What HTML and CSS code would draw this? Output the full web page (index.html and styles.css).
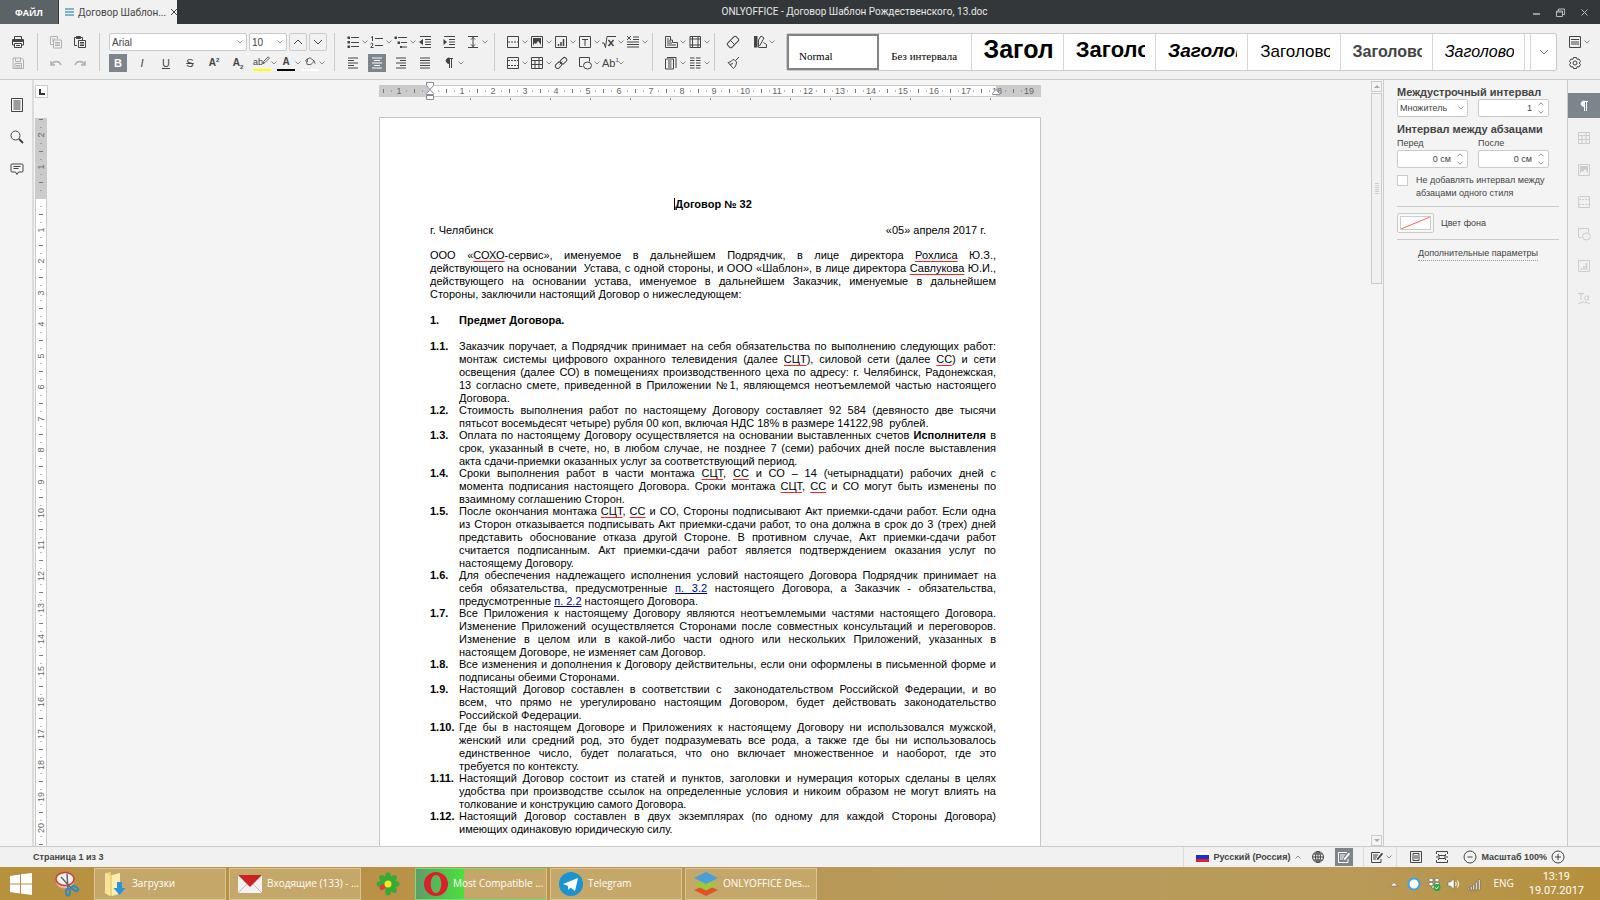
FILE: index.html
```html
<!DOCTYPE html>
<html lang="ru">
<head>
<meta charset="utf-8">
<title>ONLYOFFICE - Договор Шаблон Рождественского, 13.doc</title>
<link rel="stylesheet" href="styles.css">
<script src="rulers.js" defer></script>
</head>
<body>
<svg class="sprite" aria-hidden="true">
  <symbol id="caret" viewBox="0 0 6 4"><path d="M.5.5 3 3 5.5.5" fill="none" stroke="#888"/></symbol>
  <symbol id="up" viewBox="0 0 10 6"><path d="M1 5 5 1l4 4"/></symbol>
  <symbol id="down" viewBox="0 0 10 6"><path d="M1 1l4 4 4-4"/></symbol>
  <symbol id="print" viewBox="0 0 14 14"><path d="M3.5 4V1.5h7V4M3.5 10h-2V4.500h11V10h-2M3.500 8.500h7v4h-7zM5 10.500h4"/><path d="M2 5.500h10v1H2z" fill="currentColor"/></symbol>
  <symbol id="save" viewBox="0 0 14 14"><path d="M2 2h8.500L12.500 4v8.500H2zM4.500 2v3.500h5V2M4 12.500v-5h6.500v5M5 9.500h4.500M5 11h4.500"/></symbol>
  <symbol id="copy" viewBox="0 0 14 14"><path d="M4 9.500H1.500v-8h7V4M3 4h3M3 6h1M4.500 5h8v8h-8zM6 7.500h5M6 9h5M6 10.500h5"/></symbol>
  <symbol id="paste" viewBox="0 0 14 14"><path d="M4 10.500H1.500v-8h8V5M5.500 5.500h7v7h-7zM7 7.500h4M7 9h4M7 10.500h4"/><path d="M3.500 1.500h4v2h-4z" fill="currentColor"/></symbol>
  <symbol id="undo" viewBox="0 0 14 14"><path d="M2 5v4h4M2.500 8.500C5 4.500 10 4.500 12 9" stroke-width="1.500"/></symbol>
  <symbol id="redo" viewBox="0 0 14 14"><path d="M12 5v4H8M11.500 8.500C9 4.500 4 4.500 2 9" stroke-width="1.500"/></symbol>
  <symbol id="bullets" viewBox="0 0 14 14"><path d="M5 2.500h8M5 7.500h8M5 11.500h8"/><path d="M1.500 1.500h2.500v2.500H1.500zM1.500 6h2.500v2.500H1.500zM1.500 10.500h2.500V13H1.500z" fill="currentColor" stroke="none"/></symbol>
  <symbol id="numbers" viewBox="0 0 14 14"><path d="M5 3.500h8M5 10.500h8M1 2.500l1.500-1V6M.5 9q1-1.500 2.200-.5T.800 12.500H3.500"/></symbol>
  <symbol id="levels" viewBox="0 0 14 14"><path d="M4 2.500h9M7 7.500h6M9 12h4"/><path d="M.5 1.500H3V4H.5zM3.500 6.500H6V9H3.500zM6 11h2.500v2H6z" fill="currentColor" stroke="none"/></symbol>
  <symbol id="outdent" viewBox="0 0 14 14"><path d="M2 1.500h11M7 4.500h6M7 7h6M7 9.500h6M2 12.500h11"/><path d="M1 7l4-3v6z" fill="currentColor" stroke="none"/></symbol>
  <symbol id="indent" viewBox="0 0 14 14"><path d="M2 1.500h11M7 4.500h6M7 7h6M7 9.500h6M2 12.500h11"/><path d="M5 7L1.500 4v6z" fill="currentColor" stroke="none"/></symbol>
  <symbol id="spacing" viewBox="0 0 14 14"><path d="M2 1.500h10M2 12.500h10M7 2v10M5 4.500 7 2.500l2 2M5 9.500l2 2 2-2"/></symbol>
  <symbol id="left" viewBox="0 0 14 14"><path d="M2 2h10M2 4.500h6M2 7h10M2 9.500h6M2 12h10"/></symbol>
  <symbol id="center" viewBox="0 0 14 14"><path d="M2 2h10M4 4.500h6M2 7h10M4 9.500h6M2 12h10"/></symbol>
  <symbol id="right" viewBox="0 0 14 14"><path d="M2 2h10M6 4.500h6M2 7h10M6 9.500h6M2 12h10"/></symbol>
  <symbol id="justify" viewBox="0 0 14 14"><path d="M2 2h10M2 4.500h10M2 7h10M2 9.500h10M2 12h10"/></symbol>
  <symbol id="para" viewBox="0 0 14 14"><path d="M7.500 2v10M9.500 2v10M6 2.500h5"/><path d="M7.500 2v5.500C3 7.500 3 2 7.500 2z" fill="currentColor"/></symbol>
  <symbol id="break" viewBox="0 0 14 14"><path d="M1.500 1.500h11v11h-11z"/><path d="M2 7h11" stroke-dasharray="2 1"/></symbol>
  <symbol id="header" viewBox="0 0 14 14"><path d="M1.500 1.500h11v11h-11z"/><path d="M2 4.500h11M2 9.500h11" stroke-dasharray="2 1"/></symbol>
  <symbol id="image" viewBox="0 0 14 14"><path d="M1.500 1.500h11v11h-11z"/><path d="M3 3h8v7L8 6l-2 3-1.500-1L3 11z" fill="currentColor" stroke="none"/></symbol>
  <symbol id="chart" viewBox="0 0 14 14"><path d="M1.500 1.500h11v11h-11z"/><path d="M4.500 11V9M7 11V7M9.500 11V4" stroke-width="1.500"/></symbol>
  <symbol id="textbox" viewBox="0 0 14 14"><path d="M1.500 1.500h11v11h-11zM4 4.500h6M7 4.500V11"/></symbol>
  <symbol id="formula" viewBox="0 0 14 14"><path d="M0 8h2l1.500 4.500L5 1.500h9"/><path d="M6.500 5l5 6M11.500 5l-5 6" stroke-width="1.500"/></symbol>
  <symbol id="dropcap" viewBox="0 0 14 14"><path d="M1 1l4 4M5 1 1 5M7 2h6M7 4.500h6M1 7h12M1 9.500h12M1 12h12"/></symbol>
  <symbol id="table" viewBox="0 0 14 14"><path d="M1.500 1.500h11v11h-11zM1.500 4.500h11M1.500 8.500h11M5 4.500v8M9 1.500v11"/></symbol>
  <symbol id="link" viewBox="0 0 14 14"><rect x="6" y="2.500" width="7" height="4.500" rx="2" transform="rotate(-45 9.500 4.700)"/><rect x="1" y="7" width="7" height="4.500" rx="2" transform="rotate(-45 4.500 9.200)"/><path d="M5.500 8.500l3-3"/></symbol>
  <symbol id="shape" viewBox="0 0 14 14"><path d="M4.500 10.500h-3v-9h10v4"/><ellipse cx="9.500" cy="9.500" rx="4" ry="3.500"/></symbol>
  <symbol id="pagesize" viewBox="0 0 14 14"><path d="M1.500 12.500v-11h5V5h2v2.500h5v5zM3 4h2M3 6h4M3 8h5M3 10h9"/></symbol>
  <symbol id="margins" viewBox="0 0 14 14"><path d="M2 1.500h10.500v11H2zM4.500 1.500v11M10 1.500v11M2 4h10.500M2 10h10.500"/></symbol>
  <symbol id="orient" viewBox="0 0 14 14"><path d="M1.500 3h8v10h-8zM3 1.500h9V12M4 5h3.500M4 7h3.500M4 9h3.500M4 11h3.500"/></symbol>
  <symbol id="columns" viewBox="0 0 14 14"><path d="M2 2h4.500M2 4.500h4.500M2 7h4.500M2 9.500h4.500M2 12h4.500M8 2h4.500M8 4.500h4.500M8 7h4.500M8 9.500h4.500M8 12h4.500"/></symbol>
  <symbol id="eraser" viewBox="0 0 14 14"><rect x="1" y="4" width="12" height="6" rx="1.500" transform="rotate(-45 7 7)"/><path d="M4.500 5.500l4 4"/></symbol>
  <symbol id="brush" viewBox="0 0 14 14"><path d="M13 1 9.500 4.500M2 6.500C5 6.500 6 3.500 8 3.500L10.500 6C10.500 9 9 11.500 7.500 12.500zM4 8.500l3-1"/></symbol>
  <symbol id="scheme" viewBox="0 0 14 14"><path d="M5.500 12.500V5l2.500-4 3 2-4.500 8M6 12.500h7.500v-3L10.500 7.500"/><path d="M1 1h3.500v11.500H1z" fill="currentColor" stroke="none"/></symbol>
  <symbol id="marker" viewBox="0 0 18 14"><path d="M9 9l1-3 5-5 1.500 1.500-5 5z"/></symbol>
  <symbol id="bucket" viewBox="0 0 14 14"><path d="M2 5l5-3 5 4-4 4H4zM4 3v4M12 6l1 3"/></symbol>
  <symbol id="view" viewBox="0 0 14 14"><path d="M1.500 1.500h11v11h-11z"/><path d="M3 4.500h8M3 7h8M3 9h8"/></symbol>
  <symbol id="gear" viewBox="0 0 14 14"><circle cx="7" cy="7" r="2"/><path d="M5.500 1.500h3l.5 1.800 2-.3 1.500 2.500L11.200 7l1.300 1.500L11 11l-2-.3-.5 1.800h-3L5 10.700 3 11 1.500 8.500 2.800 7 1.500 5.500 3 3l2 .3z"/></symbol>
  <symbol id="pages" viewBox="0 0 14 14"><path d="M1.500.5h11v13h-11z"/><path d="M3.500 3h7M3.500 5h7M3.500 7h7M3.500 9h7M3.500 11h7"/></symbol>
  <symbol id="search" viewBox="0 0 14 14"><circle cx="5.500" cy="5.500" r="4.500"/><path d="M9 9l4 4" stroke-width="2"/></symbol>
  <symbol id="comment" viewBox="0 0 14 14"><path d="M2 2h10q1 0 1 1v6q0 1-1 1H8.500L7 12.500 5.500 10H2q-1 0-1-1V3q0-1 1-1zM3.500 4.500h7M3.500 6.500h5"/></symbol>
  <symbol id="textart" viewBox="0 0 14 14"><path d="M1 2.500h6M4 2.500V9M13 13Q7 9 1 13"/><circle cx="9.500" cy="7" r="2"/><path d="M11.500 4.500V9"/></symbol>
  <symbol id="globe" viewBox="0 0 14 14"><circle cx="7" cy="7" r="5.500"/><ellipse cx="7" cy="7" rx="2.500" ry="5.500"/><path d="M1.500 7h11M2.500 4h9M2.500 10h9M7 1.500v11"/></symbol>
  <symbol id="edit" viewBox="0 0 14 14"><path d="M11 9v3.500H1.500v-10H10M3 5h5M3 7h4M3 9h3M7 9l5.500-6"/><path d="M6.500 9.500l5-6.500 1.500 1-5 6z" fill="currentColor" stroke="none"/></symbol>
  <symbol id="fitpage" viewBox="0 0 14 14"><path d="M1.500 1.500h11v11h-11z"/><path d="M4 3.500h6v7H4zM5 6h4M5 8h4"/></symbol>
  <symbol id="fitwidth" viewBox="0 0 14 14"><path d="M1.500 4V1.500h11V4M1.500 10v2.500h11V10M1 7h2M11 7h2M4 5.500h6v3H4zM3.500 4v1.500h7V4M3.500 10V8.500h7V10"/></symbol>
  <symbol id="minus" viewBox="0 0 14 14"><circle cx="7" cy="7" r="6"/><path d="M4.500 7h5"/></symbol>
  <symbol id="plus" viewBox="0 0 14 14"><circle cx="7" cy="7" r="6"/><path d="M4 7h6M7 4v6"/></symbol>
</svg>

<header class="titlebar">
  <button class="file">ФАЙЛ</button>
  <div class="tab">
    <svg class="tab-lines" viewBox="0 0 9 8"><path d="M0 1h9M0 4h9M0 7h9" stroke="#5b9fbd" stroke-width="1.500"/></svg>
    <span>Договор Шаблон...</span>
    <button class="tab-close" aria-label="Закрыть"><svg viewBox="0 0 8 8"><path d="M1 1l6 6M7 1 1 7"/></svg></button>
  </div>
  <h1 class="window-title">ONLYOFFICE - Договор Шаблон Рождественского, 13.doc</h1>
  <div class="window-buttons">
    <button aria-label="Свернуть"><svg viewBox="0 0 9 9"><path d="M1 6h7" stroke-width="1.500"/></svg></button>
    <button aria-label="Окно"><svg viewBox="0 0 9 9"><path d="M.5 3h6v5.500h-6zM2.500 3V1h6v5.500h-2M.5 4h6"/></svg></button>
    <button aria-label="Закрыть окно"><svg viewBox="0 0 9 9"><path d="M1.500 1.500l6 6M7.500 1.500l-6 6"/></svg></button>
  </div>
</header>

<div class="toolbar">
  <div class="tools cols-1">
    <button class="tool" aria-label="Печать"><svg class="ico"><use href="#print"/></svg></button>
    <button class="tool off" aria-label="Сохранить"><svg class="ico"><use href="#save"/></svg></button>
  </div>
  <i class="sep"></i>
  <div class="tools cols-2">
    <button class="tool off" aria-label="Копировать"><svg class="ico"><use href="#copy"/></svg></button>
    <button class="tool" aria-label="Вставить"><svg class="ico"><use href="#paste"/></svg></button>
    <button class="tool off" aria-label="Отменить"><svg class="ico"><use href="#undo"/></svg></button>
    <button class="tool off" aria-label="Повторить"><svg class="ico"><use href="#redo"/></svg></button>
  </div>
  <i class="sep"></i>
  <div class="font-tools">
    <div class="font-row">
      <select class="field font-name" aria-label="Шрифт"><option>Arial</option></select>
      <select class="field font-size" aria-label="Размер"><option>10</option></select>
      <button class="step" aria-label="Увеличить"><svg><use href="#up"/></svg></button>
      <button class="step" aria-label="Уменьшить"><svg><use href="#down"/></svg></button>
    </div>
    <div class="tools cols-9">
      <button class="tool"><b class="ico on">B</b></button>
      <button class="tool"><i class="ico">I</i></button>
      <button class="tool"><u class="ico">U</u></button>
      <button class="tool"><s class="ico">S</s></button>
      <button class="tool"><span class="ico strong">A<sup>2</sup></span></button>
      <button class="tool"><span class="ico strong">A<sub>2</sub></span></button>
      <button class="tool"><span class="ico bar yellow">ab<svg class="pen"><use href="#marker"/></svg></span><svg class="caret"><use href="#caret"/></svg></button>
      <button class="tool"><span class="ico bar black strong">A</span><svg class="caret"><use href="#caret"/></svg></button>
      <button class="tool" aria-label="Заливка"><span class="ico bar white"><svg class="glyph"><use href="#bucket"/></svg></span><svg class="caret"><use href="#caret"/></svg></button>
    </div>
  </div>
  <i class="sep"></i>
  <div class="tools cols-6">
    <button class="tool" aria-label="Маркеры"><svg class="ico"><use href="#bullets"/></svg><svg class="caret"><use href="#caret"/></svg></button>
    <button class="tool" aria-label="Нумерация"><svg class="ico"><use href="#numbers"/></svg><svg class="caret"><use href="#caret"/></svg></button>
    <button class="tool" aria-label="Многоуровневый список"><svg class="ico"><use href="#levels"/></svg><svg class="caret"><use href="#caret"/></svg></button>
    <button class="tool" aria-label="Уменьшить отступ"><svg class="ico"><use href="#outdent"/></svg></button>
    <button class="tool" aria-label="Увеличить отступ"><svg class="ico"><use href="#indent"/></svg></button>
    <button class="tool" aria-label="Интервал"><svg class="ico"><use href="#spacing"/></svg><svg class="caret"><use href="#caret"/></svg></button>
    <button class="tool" aria-label="По левому краю"><svg class="ico"><use href="#left"/></svg></button>
    <button class="tool" aria-label="По центру"><svg class="ico on"><use href="#center"/></svg></button>
    <button class="tool" aria-label="По правому краю"><svg class="ico"><use href="#right"/></svg></button>
    <button class="tool" aria-label="По ширине"><svg class="ico"><use href="#justify"/></svg></button>
    <button class="tool" aria-label="Непечатаемые символы"><svg class="ico"><use href="#para"/></svg><svg class="caret"><use href="#caret"/></svg></button>
  </div>
  <i class="sep wide"></i>
  <div class="tools cols-6">
    <button class="tool" aria-label="Разрыв"><svg class="ico"><use href="#break"/></svg><svg class="caret"><use href="#caret"/></svg></button>
    <button class="tool" aria-label="Изображение"><svg class="ico"><use href="#image"/></svg><svg class="caret"><use href="#caret"/></svg></button>
    <button class="tool" aria-label="Диаграмма"><svg class="ico"><use href="#chart"/></svg><svg class="caret"><use href="#caret"/></svg></button>
    <button class="tool" aria-label="Надпись"><svg class="ico"><use href="#textbox"/></svg><svg class="caret"><use href="#caret"/></svg></button>
    <button class="tool" aria-label="Формула"><svg class="ico"><use href="#formula"/></svg><svg class="caret"><use href="#caret"/></svg></button>
    <button class="tool" aria-label="Буквица"><svg class="ico"><use href="#dropcap"/></svg><svg class="caret"><use href="#caret"/></svg></button>
    <button class="tool" aria-label="Колонтитулы"><svg class="ico"><use href="#header"/></svg><svg class="caret"><use href="#caret"/></svg></button>
    <button class="tool" aria-label="Таблица"><svg class="ico"><use href="#table"/></svg><svg class="caret"><use href="#caret"/></svg></button>
    <button class="tool" aria-label="Ссылка"><svg class="ico"><use href="#link"/></svg></button>
    <button class="tool" aria-label="Фигура"><svg class="ico"><use href="#shape"/></svg><svg class="caret"><use href="#caret"/></svg></button>
    <button class="tool"><span class="ico">Ab<sup>1</sup></span><svg class="caret"><use href="#caret"/></svg></button>
  </div>
  <i class="sep"></i>
  <div class="tools cols-2">
    <button class="tool" aria-label="Ориентация"><svg class="ico"><use href="#pagesize"/></svg><svg class="caret"><use href="#caret"/></svg></button>
    <button class="tool" aria-label="Поля"><svg class="ico"><use href="#margins"/></svg><svg class="caret"><use href="#caret"/></svg></button>
    <button class="tool" aria-label="Размер страницы"><svg class="ico"><use href="#orient"/></svg><svg class="caret"><use href="#caret"/></svg></button>
    <button class="tool" aria-label="Колонки"><svg class="ico"><use href="#columns"/></svg><svg class="caret"><use href="#caret"/></svg></button>
  </div>
  <i class="sep"></i>
  <div class="tools cols-2 loose">
    <button class="tool" aria-label="Очистить стиль"><svg class="ico"><use href="#eraser"/></svg></button>
    <button class="tool" aria-label="Цветовая схема"><svg class="ico"><use href="#scheme"/></svg><svg class="caret"><use href="#caret"/></svg></button>
    <button class="tool" aria-label="Копировать стиль"><svg class="ico"><use href="#brush"/></svg></button>
  </div>
  <div class="styles">
    <button class="style normal"><span>Normal</span></button>
    <button class="style compact"><span>Без интервала</span></button>
    <button class="style h1"><span>Заголовок</span></button>
    <button class="style h2"><span>Заголовок</span></button>
    <button class="style h3"><span>Заголовок</span></button>
    <button class="style h4"><span>Заголовок</span></button>
    <button class="style h5"><span>Заголовок</span></button>
    <button class="style h6"><span>Заголовок</span></button>
    <i class="next"></i>
    <button class="more" aria-label="Все стили"><svg><use href="#down"/></svg></button>
  </div>
  <div class="tools cols-1">
    <button class="tool" aria-label="Вид"><svg class="ico"><use href="#view"/></svg><svg class="caret"><use href="#caret"/></svg></button>
    <button class="tool" aria-label="Параметры"><svg class="ico"><use href="#gear"/></svg></button>
  </div>
</div>

<div class="main">
  <nav class="side-left">
    <button aria-label="Навигация"><svg class="ico"><use href="#pages"/></svg></button>
    <button aria-label="Поиск"><svg class="ico"><use href="#search"/></svg></button>
    <button aria-label="Комментарии"><svg class="ico"><use href="#comment"/></svg></button>
  </nav>

  <section class="editor">
    <div class="corner"><svg viewBox="0 0 6 6"><path d="M1 0v5h5" fill="none" stroke="#333" stroke-width="2"/></svg></div>
    <div class="hruler"><svg id="hruler" width="662" height="20"></svg></div>
    <div class="vruler"><svg id="vruler" width="12" height="728"></svg></div>
    <div class="canvas">
      <article class="page">
        <h2 class="doc-title">Договор № 32</h2>
        <p class="place"><span>г. Челябинск</span><span>«05» апреля 2017 г.</span></p>
        <p class="intro">ООО «<span class="err">СОХО</span>-сервис», именуемое в дальнейшем Подрядчик, в лице директора <span class="err">Рохлиса</span> Ю.З., действующего&nbsp;на&nbsp;основании &nbsp;Устава, с одной стороны, и ООО «Шаблон», в лице директора <span class="err">Савлукова</span> Ю.И., действующего&nbsp;на&nbsp;основании устава, именуемое в дальнейшем Заказчик, именуемые в дальнейшем Стороны,&nbsp;заключили настоящий Договор о нижеследующем:</p>
        <h3 class="clause"><span>1.</span><span>Предмет Договора.</span></h3>
        <div class="clauses">
          <div class="clause"><b>1.1.</b><p>Заказчик поручает, а Подрядчик принимает на себя обязательства по выполнению следующих работ: монтаж системы цифрового охранного телевидения (далее <span class="err">СЦТ</span>), силовой сети (далее <span class="err">СС</span>) и сети освещения (далее СО) в помещениях производственного цеха по адресу: г. Челябинск, Радонежская, 13&nbsp;согласно смете, приведенной в Приложении №1, являющемся неотъемлемой частью настоящего Договора.</p></div>
          <div class="clause"><b>1.2.</b><p>Стоимость выполнения работ по настоящему Договору составляет 92 584 (девяносто две тысячи пятьсот восемьдесят четыре) рубля 00 коп, включая НДС 18% в размере 14122,98 &nbsp;рублей.</p></div>
          <div class="clause"><b>1.3.</b><p>Оплата по настоящему Договору осуществляется на основании выставленных счетов <b>Исполнителя</b> в срок, указанный в счете, но, в любом случае, не позднее 7 (семи) рабочих дней после выставления акта сдачи-приемки оказанных услуг за соответствующий период.</p></div>
          <div class="clause"><b>1.4.</b><p>Сроки выполнения работ в части монтажа <span class="err">СЦТ</span>, <span class="err">СС</span> и СО – 14 (четырнадцати) рабочих дней с момента&nbsp;подписания настоящего Договора. Сроки монтажа <span class="err">СЦТ</span>, <span class="err">СС</span> и СО могут быть изменены по взаимному&nbsp;соглашению Сторон.</p></div>
          <div class="clause"><b>1.5.</b><p>После окончания монтажа <span class="err">СЦТ</span>, <span class="err">СС</span> и СО, Стороны подписывают Акт приемки-сдачи работ. Если одна из Сторон отказывается подписывать Акт приемки-сдачи работ, то она должна в срок до 3 (трех) дней представить обоснование отказа другой Стороне. В противном случае, Акт приемки-сдачи работ считается подписанным. Акт приемки-сдачи работ является подтверждением оказания услуг по настоящему Договору.</p></div>
          <div class="clause"><b>1.6.</b><p>Для обеспечения надлежащего исполнения условий настоящего Договора Подрядчик принимает на себя обязательства, предусмотренные <a href="#">п. 3.2</a> настоящего Договора, а Заказчик - обязательства, предусмотренные <a href="#">п. 2.2</a> настоящего Договора.</p></div>
          <div class="clause"><b>1.7.</b><p>Все Приложения к настоящему Договору являются неотъемлемыми частями настоящего Договора. Изменение Приложений осуществляется Сторонами после совместных консультаций и переговоров. Изменение в целом или в какой-либо части одного или нескольких Приложений, указанных в настоящем Договоре, не изменяет сам Договор.</p></div>
          <div class="clause"><b>1.8.</b><p>Все изменения и дополнения к Договору действительны, если они оформлены в письменной форме и подписаны обеими Сторонами.</p></div>
          <div class="clause"><b>1.9.</b><p>Настоящий Договор составлен в соответствии с &nbsp;законодательством Российской Федерации, и во всем,&nbsp;что прямо не урегулировано настоящим Договором, будет действовать законодательство Российской&nbsp;Федерации.</p></div>
          <div class="clause"><b>1.10.</b><p>Где бы в настоящем Договоре и Приложениях к настоящему Договору ни использовался мужской, женский или средний род, это будет подразумевать все рода, а также где бы ни использовалось единственное число, будет полагаться, что оно включает множественное и наоборот, где это требуется&nbsp;по&nbsp;контексту.</p></div>
          <div class="clause"><b>1.11.</b><p>Настоящий Договор состоит из статей и пунктов, заголовки и нумерация которых сделаны в целях удобства при производстве ссылок на определенные условия и никоим образом не могут влиять на толкование и конструкцию самого Договора.</p></div>
          <div class="clause"><b>1.12.</b><p>Настоящий Договор составлен в двух экземплярах (по одному для каждой Стороны Договора) имеющих одинаковую юридическую силу.</p></div>
        </div>
      </article>
    </div>
  </section>

  <div class="scrollbar">
    <button aria-label="Вверх"><svg viewBox="0 0 6 3"><path d="M0 3 3 0l3 3z"/></svg></button>
    <div class="thumb"><i></i></div>
    <button class="end" aria-label="Вниз"><svg viewBox="0 0 6 3"><path d="M0 0l3 3 3-3z"/></svg></button>
  </div>

  <aside class="panel">
    <h4>Междустрочный интервал</h4>
    <div class="pair">
      <select class="field" aria-label="Междустрочный интервал"><option>Множитель</option></select>
      <div class="spin"><input aria-label="Значение" value="1"><svg><use href="#up"/></svg><svg><use href="#down"/></svg></div>
    </div>
    <h4 class="second">Интервал между абзацами</h4>
    <div class="pair">
      <label for="before">Перед</label><label for="after">После</label>
      <div class="spin"><input id="before" value="0 см"><svg><use href="#up"/></svg><svg><use href="#down"/></svg></div>
      <div class="spin"><input id="after" value="0 см"><svg><use href="#up"/></svg><svg><use href="#down"/></svg></div>
    </div>
    <label class="check"><input type="checkbox"><span>Не добавлять интервал между абзацами одного стиля</span></label>
    <div class="back">
      <button class="swatch" id="swatch" aria-label="Цвет фона"><svg viewBox="0 0 32 14" preserveAspectRatio="none"><path d="M0 14 32 0" stroke="#ff4d4d"/></svg></button>
      <label for="swatch">Цвет фона</label>
    </div>
    <a class="advanced" href="#">Дополнительные параметры</a>
  </aside>

  <nav class="side-right">
    <button class="on" aria-label="Абзац"><svg class="ico"><use href="#para"/></svg></button>
    <button aria-label="Таблица"><svg class="ico"><use href="#table"/></svg></button>
    <button aria-label="Изображение"><svg class="ico"><use href="#image"/></svg></button>
    <button aria-label="Колонтитулы"><svg class="ico"><use href="#header"/></svg></button>
    <button aria-label="Фигура"><svg class="ico"><use href="#shape"/></svg></button>
    <button aria-label="Диаграмма"><svg class="ico"><use href="#chart"/></svg></button>
    <button aria-label="Текст"><svg class="ico"><use href="#textart"/></svg></button>
  </nav>
</div>

<footer class="status">
  <span>Страница 1 из 3</span>
  <div class="status-group lang">
    <svg class="flag" viewBox="0 0 13 10"><path d="M0 0h13v3H0z" fill="#fff"/><path d="M0 3h13v4H0z" fill="#1a2fd8"/><path d="M0 7h13v3H0z" fill="#e0202a"/></svg>
    <button>Русский (Россия)</button>
    <svg class="caret flip"><use href="#caret"/></svg>
    <button aria-label="Язык документа"><svg class="ico"><use href="#globe"/></svg></button>
    <button aria-label="Проверка орфографии"><svg class="ico on"><use href="#edit"/></svg></button>
  </div>
  <div class="status-group">
    <button aria-label="Рецензирование"><svg class="ico"><use href="#edit"/></svg></button><svg class="caret"><use href="#caret"/></svg>
  </div>
  <div class="status-group fit">
    <button aria-label="По размеру страницы"><svg class="ico"><use href="#fitpage"/></svg></button>
    <button aria-label="По ширине"><svg class="ico"><use href="#fitwidth"/></svg></button>
  </div>
  <div class="zoom">
    <button aria-label="Уменьшить"><svg class="ico"><use href="#minus"/></svg></button>
    <span>Масштаб 100%</span>
    <button aria-label="Увеличить масштаб"><svg class="ico"><use href="#plus"/></svg></button>
  </div>
</footer>

<div class="taskbar">
  <button class="pin" aria-label="Пуск"><svg viewBox="0 0 24 24"><path fill="#fff" d="M1 4l10-1.500V11.500H1zM12 2.300 23 1v10.500H12zM1 12.500h10v9L1 20zM12 12.500h11V23l-11-1.500z"/></svg></button>
  <button class="pin" aria-label="Ножницы"><svg viewBox="0 0 26 26"><ellipse cx="11" cy="11" rx="9" ry="6.500" fill="#e8b8ac"/><ellipse cx="11" cy="8" rx="9" ry="6.500" fill="#f7f3f3" stroke="#d43a35" stroke-width="1.500"/><path d="M7 6l11 12M13 3l1 15" stroke="#666" stroke-width="1.500"/><ellipse cx="14" cy="21" rx="2" ry="3.500" fill="none" stroke="#2d8bc4" stroke-width="2"/><ellipse cx="21" cy="17.500" rx="3.500" ry="2" fill="none" stroke="#2d8bc4" stroke-width="2" transform="rotate(30 21 17.500)"/></svg></button>
  <button class="task"><svg viewBox="0 0 26 26"><path d="M3 2l6-1v3h9v19l-10 2-5-3z" fill="#efd67c"/><path d="M10 4l8-2v20l-8 3z" fill="#fbeeb0"/><path d="M3 2l5 3v20l-5-3z" fill="#f8e59b"/><path d="M15 11h5v6h3.500l-6 7-6-7H15z" fill="#2a93e0"/></svg><span>Загрузки</span></button>
  <button class="task"><svg viewBox="0 0 26 26"><path d="M1 4h24v18H1z" fill="#f2f2f2"/><path d="M1 22l9-9M25 22l-9-9" stroke="#bbb"/><path d="M1 4h24L13 16z" fill="#cc2222"/></svg><span>Входящие (133) - ...</span></button>
  <button class="pin icq" aria-label="ICQ"><svg viewBox="0 0 26 26"><g fill="#37a935"><ellipse cx="13" cy="6" rx="3" ry="4.500"/><ellipse cx="13" cy="6" rx="3" ry="4.500" transform="rotate(45 13 13)"/><ellipse cx="13" cy="6" rx="3" ry="4.500" transform="rotate(90 13 13)"/><ellipse cx="13" cy="6" rx="3" ry="4.500" transform="rotate(135 13 13)"/><ellipse cx="13" cy="6" rx="3" ry="4.500" transform="rotate(180 13 13)"/><ellipse cx="13" cy="6" rx="3" ry="4.500" transform="rotate(-90 13 13)"/><ellipse cx="13" cy="6" rx="3" ry="4.500" transform="rotate(-45 13 13)"/></g><ellipse cx="13" cy="7" rx="2.500" ry="3.500" fill="#e23b3b" transform="rotate(-120 13 13)"/><circle cx="13" cy="13" r="3.500" fill="#f6e626"/></svg></button>
  <button class="task progress"><svg viewBox="0 0 26 26"><path fill-rule="evenodd" fill="#dc1f2c" d="M13 1a12 12 0 1 1 0 24 12 12 0 0 1 0-24zm0 3c-7 0-7 18 0 18s7-18 0-18z"/></svg><span>Most Compatible ...</span></button>
  <button class="task"><svg viewBox="0 0 26 26"><circle cx="13" cy="13" r="12" fill="#1b93d2"/><path d="M5 13 20 7l-3 13-4.500-3.500L10 19v-4z" fill="#fff"/></svg><span>Telegram</span></button>
  <button class="task"><svg viewBox="0 0 26 26"><path d="M1 19l12-5 12 5-12 6z" fill="#e25228"/><path d="M1 13.500l12-5 12 5-12 6z" fill="#9cc93a"/><path d="M1 7l12-6 12 6-12 6z" fill="#4a9fd8"/></svg><span>ONLYOFFICE Des...</span></button>
  <div class="tray">
    <svg viewBox="0 0 14 14"><path d="M3.500 9 7 5.500 10.500 9z" fill="#fff" stroke="#555" stroke-width=".5"/></svg>
    <svg viewBox="0 0 14 14"><circle cx="7" cy="7" r="5.500" fill="#fff" stroke="#3ba0ee" stroke-width="2"/></svg>
    <svg viewBox="0 0 14 14"><path d="M4 1l3 2-3 2-3-2zM10 1l3 2-3 2-3-2zM4 5l3 2-3 2-3-2zM10 5l3 2-3 2-3-2zM4 10l3-2 3 2-3 2z" fill="#fff" stroke="#444" stroke-width=".5"/><circle cx="10" cy="10.500" r="3.500" fill="#27a844"/><path d="M8.500 10.500l1 1.500 2-2.500" stroke="#fff" fill="none"/></svg>
    <svg viewBox="0 0 14 14"><path d="M1 5h2.500L7 1.500v11L3.500 9H1z" fill="#fff" stroke="#555" stroke-width=".5"/><path d="M8.500 5q1.500 2 0 4M10.500 3.500q2.500 3.500 0 7" stroke="#fff" fill="none"/></svg>
    <svg viewBox="0 0 14 14"><path d="M1 11h1.500v2H1zM3.500 9.500H5V13H3.500zM6 7.500h1.500V13H6zM8.500 5H10v8H8.500zM11.500 2.500H13V13h-1.500z" fill="#fff" stroke="#555" stroke-width=".5"/></svg>
  </div>
  <span class="kbd">ENG</span>
  <time class="clock">13:19<br>19.07.2017</time>
</div>
</body>
</html>
```
FILE: styles.css
```css
* { box-sizing: border-box; }

body {
  margin: 0;
  height: 100vh;
  display: flex;
  flex-direction: column;
  overflow: hidden;
  background: #f4f4f4;
  color: #444;
  font: 11px/13px "Liberation Sans", Arial, sans-serif;
}

button {
  margin: 0;
  padding: 0;
  border: 0;
  background: none;
  color: inherit;
  font: inherit;
}

h1, h2, h3, h4, p { margin: 0; }

svg {
  display: block;
  flex: none;
  fill: none;
  stroke: currentColor;
}

.sprite { position: absolute; width: 0; height: 0; }

/* Title bar */
.titlebar {
  flex: none;
  display: flex;
  height: 24px;
  background: #33373a;
  color: #e8e8e8;
  font-family: Roboto, sans-serif;
  font-size: 10px;
}
.file {
  width: 58px;
  background: #5c6367;
  color: #fff;
  font-family: "Open Sans", sans-serif;
  font-size: 9px;
  font-weight: 700;
}
.tab {
  display: flex;
  align-items: center;
  gap: 4px;
  width: 118px;
  margin-left: 1px;
  padding: 0 6px;
  background: #f1f1f1;
  color: #444;
}
.tab span { flex: 1; white-space: nowrap; }
.tab-lines { width: 9px; height: 8px; }
.tab-close svg { width: 8px; height: 8px; }
.window-title {
  flex: 1;
  font-size: 10px;
  font-weight: 400;
  line-height: 24px;
  text-align: center;
}
.window-buttons {
  display: flex;
  align-items: center;
  gap: 15px;
  padding-right: 11px;
  color: #bbb;
}
.window-buttons svg { width: 9px; height: 9px; }

/* Toolbar */
.toolbar {
  flex: none;
  display: flex;
  height: 56px;
  padding: 9px 10px 0 9px;
  border-bottom: 1px solid #cbcbcb;
  background: #f1f1f1;
}
.tools {
  display: grid;
  grid-auto-rows: 18px;
  row-gap: 3px;
  align-content: start;
}
.cols-1 { grid-template-columns: 24px; }
.cols-2 { grid-template-columns: repeat(2, 24px); }
.cols-6 { grid-template-columns: repeat(6, 24px); }
.cols-9 { grid-template-columns: repeat(9, 24px); }
.loose { column-gap: 3px; }
.sep {
  width: 1px;
  height: 38px;
  margin: 0 9px 0 4px;
  background: #cbcbcb;
}
.sep.wide { margin-left: 6px; }
.tool { display: flex; align-items: center; }
.off { color: #b0b0b0; }
.ico {
  display: block;
  position: relative;
  width: 18px;
  height: 18px;
  padding: 2px;
  text-align: center;
  line-height: 14px;
  white-space: nowrap;
}
.ico.on { background: #7d858c; color: #fff; }
.ico sup, .ico sub { font-size: 6px; line-height: 1px; }
.strong { font-size: 10px; font-weight: 700; }
.caret { width: 6px; height: 4px; }
.flip { transform: scaleY(-1); }
.bar { border-bottom: 2px solid; padding-top: 1px; height: 16px; line-height: 12px; }
.yellow { border-color: #ff0; font-size: 9px; text-align: left; padding-left: 0; }
.black { border-color: #000; }
.white { border-color: #fff; }
.pen { position: absolute; right: 0; top: 1px; width: 16px; height: 12px; }
.glyph { width: 14px; height: 12px; }

.font-tools { display: grid; gap: 3px; width: 221px; align-content: start; }
.font-row { display: flex; height: 18px; gap: 2px; }
.field {
  height: 18px;
  padding: 0 12px 0 2px;
  border: 1px solid #cbcbcb;
  border-radius: 2px;
  appearance: none;
  background: #fff url('data:image/svg+xml,<svg xmlns="http://www.w3.org/2000/svg" width="6" height="4"><path d="M.5.5 3 3 5.500.5" fill="none" stroke="%23999"/></svg>') no-repeat right 3px center;
  color: #444;
  font: inherit;
}
.font-row .field { font-size: 10px; }
.font-name { width: 138px; }
.font-size { width: 38px; }
.step {
  display: grid;
  place-items: center;
  width: 18px;
  border: 1px solid #cbcbcb;
  border-radius: 2px;
}
.step svg { width: 10px; height: 6px; }

.styles {
  flex: 1;
  display: grid;
  grid-template-columns: repeat(8, 1fr) 6px 25px;
  height: 38px;
  margin: 0 9px 0 11px;
  border: 1px solid #cbcbcb;
  border-radius: 2px;
  background: #fff;
  color: #000;
}
.style {
  display: flex;
  align-items: center;
  min-width: 0;
  padding: 0 10px 0 12px;
  border-right: 1px solid #d8d8d8;
  text-align: left;
}
.style span { flex: 1; overflow: hidden; white-space: nowrap; line-height: 30px; }
.normal, .compact { padding-top: 8px; font-family: "Liberation Serif", serif; }
.normal { padding-left: 10px; border: 2px solid #848484; }
.normal span, .compact span { line-height: 14px; }
.h1 { padding-bottom: 6px; font-size: 25px; font-weight: 700; }
.h2 { padding-bottom: 4px; font-size: 22px; font-weight: 700; }
.h3 { padding-bottom: 2px; font-size: 19px; font-weight: 700; font-style: italic; }
.h4 { font-size: 17px; }
.h5 { font-size: 16px; font-weight: 700; color: #444; }
.h6 { font-size: 16px; font-style: italic; }
.next { border-right: 1px solid #d8d8d8; }
.more { display: grid; place-items: center; color: #777; }
.more svg { width: 10px; height: 6px; }

/* Work area */
.main { flex: 1; display: flex; min-height: 0; }
.side-left {
  display: flex;
  flex-direction: column;
  gap: 14px;
  width: 34px;
  padding: 16px 0 0 8px;
  border-right: 2px solid #dcdcdc;
}
.editor {
  flex: 1;
  display: grid;
  grid-template: 37px 1fr / 15px 1fr;
  min-width: 0;
}
.corner {
  display: grid;
  place-items: center;
  width: 13px;
  height: 13px;
  margin: 5px 0 0 1px;
  border: 1px solid #cbcbcb;
  background: #fff;
}
.corner svg { width: 6px; height: 6px; }
.hruler { display: flex; justify-content: center; padding-top: 2px; }
.vruler { padding: 1px 0 0 1px; overflow: hidden; }
.hruler text, .vruler text {
  fill: #666;
  stroke: none;
  font-size: 9px;
  text-anchor: middle;
}
.canvas { overflow: hidden; }
.page {
  width: 662px;
  min-height: 936px;
  margin: 0 auto;
  padding: 80px 44px 0 50px;
  border: 1px solid #c4c8cc;
  background: #fff;
  color: #000;
}
.doc-title { margin-bottom: 13px; font: inherit; font-weight: 700; text-align: center; }
.doc-title::before { content: ""; display: inline-block; height: 12px; border-left: 1px solid #000; vertical-align: -2px; }
.place { display: flex; justify-content: space-between; margin-bottom: 12px; padding-right: 10px; }
.intro { margin-bottom: 13px; text-align: justify; }
.clause { display: grid; grid-template-columns: 29px 1fr; font: inherit; text-align: justify; }
h3.clause { margin-bottom: 13px; font-weight: 700; }
.clause + .clause { margin-top: -1px; }
.clause a { color: #0000a0; }
.err { text-decoration: underline 1px #f22; text-underline-offset: 2px; }

.scrollbar {
  display: flex;
  flex-direction: column;
  gap: 1px;
  width: 12px;
  padding: 1px 1px 0 0;
}
.scrollbar button {
  display: grid;
  place-items: center;
  height: 11px;
  border: 1px solid #cbcbcb;
}
.scrollbar button svg { width: 6px; height: 3px; fill: #aaa; stroke: none; }
.thumb {
  display: grid;
  place-items: center;
  height: 191px;
  border: 1px solid #cbcbcb;
  background: #f1f1f1;
}
.thumb i { width: 4px; height: 12px; background: repeating-linear-gradient(#ccc 0 1px, transparent 1px 2px); }
.scrollbar .end { margin-top: auto; }

.panel { width: 184px; padding: 6px 8px 0 13px; border-left: 1px solid #cbcbcb; font-size: 9px; }
.panel h4 { font-size: 11px; white-space: nowrap; }
.panel .second { margin-top: 6px; }
.pair { display: grid; grid-template-columns: 71px 71px; column-gap: 10px; }
.pair label { line-height: 14px; }
.spin {
  display: grid;
  grid-template: 8px 8px / 1fr 14px;
  place-items: center;
  border: 1px solid #cbcbcb;
  border-radius: 2px;
  background: #fff;
}
.spin input {
  grid-row: 1 / 3;
  width: 100%;
  height: 16px;
  padding: 0 2px 0 0;
  border: 0;
  background: none;
  color: #444;
  font: inherit;
  text-align: right;
}
.spin svg { width: 6px; height: 4px; }
.check { display: flex; gap: 8px; margin-top: 6px; padding-bottom: 6px; border-bottom: 1px solid #cbcbcb; }
.check input {
  flex: none;
  width: 11px;
  height: 11px;
  margin: 1px 0 0;
  border: 1px solid #cbcbcb;
  appearance: none;
  background: #fff;
}
.back { display: flex; align-items: center; gap: 7px; padding: 6px 0; border-bottom: 1px solid #cbcbcb; }
.swatch { width: 37px; height: 20px; padding: 2px; border: 1px solid #cbcbcb; border-radius: 2px; background: #f8f8f8; }
.swatch svg { width: 31px; height: 14px; border: 1px solid #ccc; background: #fff; }
.advanced {
  display: block;
  width: max-content;
  margin: 7px auto 0;
  border-bottom: 1px dotted #999;
  color: inherit;
  text-decoration: none;
}
.side-right {
  display: flex;
  flex-direction: column;
  gap: 7px;
  width: 33px;
  padding-top: 13px;
  border-left: 1px solid #cbcbcb;
  background: #f1f1f1;
}
.side-right button { display: grid; place-items: center; height: 25px; color: #ccc; }
.side-right .on { background: #7d858c; color: #fff; }

/* Status bar */
.status {
  flex: none;
  display: flex;
  align-items: center;
  height: 21px;
  padding: 0 33px;
  border-top: 1px solid #cbcbcb;
  background: #f1f1f1;
  font-size: 9px;
  font-weight: 700;
}
.status-group {
  display: flex;
  align-items: center;
  height: 100%;
  padding: 0 4px;
}
.lang { gap: 5px; margin-left: auto; padding: 0 10px 0 12px; border-left: 1px solid #dcdcdc; border-right: 1px solid #dcdcdc; }
.lang .ico { margin-left: 3px; }
.fit { gap: 8px; padding: 0 10px; border-left: 1px solid #dcdcdc; }
.flag { width: 13px; height: 10px; stroke: none; }
.zoom { display: flex; align-items: center; gap: 2px; }

/* Taskbar */
.taskbar {
  flex: none;
  display: flex;
  align-items: center;
  height: 33px;
  padding: 0 16px 0 9px;
  background: linear-gradient(90deg, #b8913f, #b99249 30%, #b89b5c 60%, #b99a58 85%, #b58f3a);
  color: #fff;
  font-family: "Open Sans", "Noto Sans", sans-serif;
  font-size: 10px;
}
.taskbar svg { stroke: none; }
.pin { width: 24px; }
.pin + .pin { margin: 0 16px 0 21px; }
.pin svg, .task svg { width: 26px; height: 26px; }
.pin:first-child svg { width: 24px; height: 24px; }
.icq { width: 26px; margin: 0 14px 0 11px; }
.task {
  display: flex;
  align-items: center;
  gap: 4px;
  width: 132px;
  height: 32px;
  margin-right: 3px;
  padding: 0 7px;
  border: 1px solid #d9c593;
  background: #c5a769;
  white-space: nowrap;
}
.progress { border-color: #6fe07a #d9c593 #6fe07a #6fe07a; background: linear-gradient(90deg, #5f9d68, #4be03c 48px, #c5a769 48px); }
.tray { display: flex; align-items: center; gap: 6px; margin-left: auto; }
.tray svg { width: 14px; height: 14px; }
.kbd { margin: 0 15px 0 12px; }
.clock { font: 11px/14px "Liberation Sans Narrow", Roboto, sans-serif; text-align: center; }
```
FILE: rulers.js
```js
(function () {
  var CM = 31.5;

  function mark(i, at, vertical, mid) {
    var q = ((i % 4) + 4) % 4;
    var len = q === 2 ? 2 : 0.5;
    if (q === 0) {
      var n = Math.abs(i / 4);
      if (!n) return '';
      return vertical
        ? '<text transform="translate(' + (mid + 3) + ' ' + at + ') rotate(-90)">' + n + '</text>'
        : '<text x="' + at + '" y="' + (mid + 3) + '">' + n + '</text>';
    }
    return vertical
      ? '<path stroke="#777" d="M' + (mid - len) + ' ' + at + 'h' + len * 2 + '"/>'
      : '<path stroke="#777" d="M' + at + ' ' + (mid - len) + 'v' + len * 2 + '"/>';
  }

  function marks(from, to, zero, vertical, mid) {
    var out = '';
    for (var i = from; i <= to; i++) {
      out += mark(i, Math.round(zero + i * CM / 4) + (i % 4 ? 0.5 : 0), vertical, mid);
    }
    return out;
  }

  var h = '<path d="M.5 3.500h661v11H.5z" fill="#fff" stroke="#cbcbcb"/>' +
    '<path d="M0 3h51v12H0zM617 3h45v12h-45z" fill="#cbcbcb" stroke="none"/>' +
    marks(-6, 76, 51, false, 9);
  for (var x = 91; x < 617; x += 40) h += '<path stroke="#888" d="M' + x + '.5 16v2"/>';
  h += '<path d="M47.500.5h7v3l-3.500 4-3.500-4zM51 7.500l3.500 4v1h-7v-1zM47.500 13.500h7v4h-7zM617 7.500l3.500 4v1h-7v-1z" fill="#fff" stroke="#889"/>';
  document.getElementById('hruler').innerHTML = h;

  document.getElementById('vruler').innerHTML =
    '<path d="M.5.5h11v760H.5z" fill="#fff" stroke="#cbcbcb"/>' +
    '<path d="M0 0h12v81H0z" fill="#cbcbcb" stroke="none"/>' +
    marks(-10, 84, 80, true, 6);
})();
```
